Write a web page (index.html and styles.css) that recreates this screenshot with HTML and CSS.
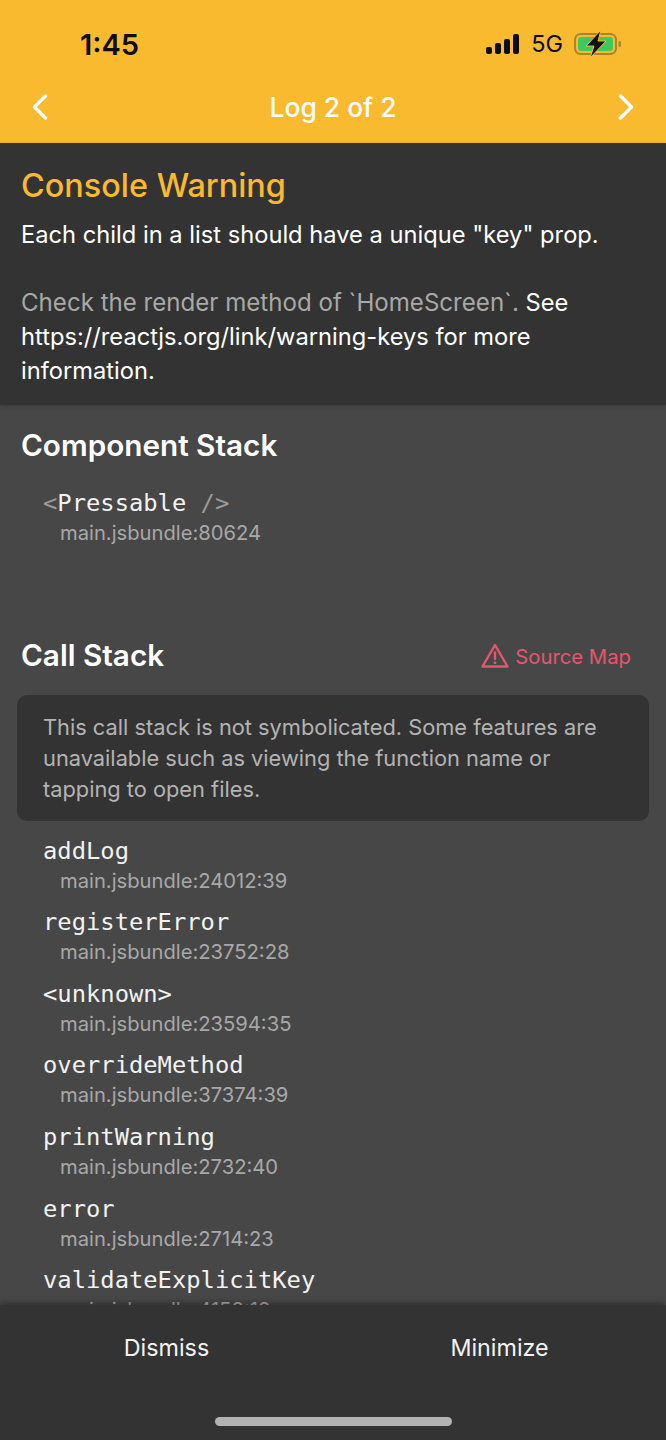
FILE: index.html
```html
<!DOCTYPE html>
<html lang="en">
<head>
<meta charset="utf-8">
<title>Log 2 of 2</title>
<link rel="stylesheet" href="styles.css">
</head>
<body>
<div class="screen">
  <header class="top">
    <div class="status">
      <span class="time">1:45</span>
      <div class="status-right">
        <svg class="signal" width="34" height="20" viewBox="0 0 34 20"><rect x="0" y="13" width="6" height="7" rx="2"/><rect x="9" y="9" width="6" height="11" rx="2"/><rect x="18" y="5" width="6" height="15" rx="2"/><rect x="27" y="0" width="6" height="20" rx="2"/></svg>
        <span class="net">5G</span>
        <svg class="battery" width="48" height="28" viewBox="0 0 48 28"><rect x="1" y="4" width="41" height="20" rx="5.5" fill="none" stroke="#a9852c" stroke-width="2"/><rect x="4" y="7" width="35" height="14" rx="3" fill="#41c85c"/><rect x="44.5" y="11" width="2.5" height="6" rx="1.2" fill="#a9852c"/><path d="M27 0 L12 16 H20 L16 28 L32 11 H24 Z" fill="#111" stroke="#faba30" stroke-width="1"/></svg>
      </div>
    </div>
    <nav class="nav">
      <svg class="chev" width="16" height="26" viewBox="0 0 16 26"><path d="M13.5 2 L2.5 13 L13.5 24"/></svg>
      <span class="nav-title">Log 2 of 2</span>
      <svg class="chev" width="16" height="26" viewBox="0 0 16 26"><path d="M2.5 2 L13.5 13 L2.5 24"/></svg>
    </nav>
  </header>

  <section class="message">
    <h1 class="level">Console Warning</h1>
    <p class="text">Each child in a list should have a unique "key" prop.</p>
    <p class="text detail"><span class="dim">Check the render method of `HomeScreen`.</span> See https://reactjs.org/link/warning-keys for more information.</p>
  </section>

  <main class="body">
    <h2 class="heading">Component Stack</h2>
    <div class="frame first">
      <div class="fn"><span class="dim2">&lt;</span>Pressable <span class="dim2">/&gt;</span></div>
      <div class="loc">main.jsbundle:80624</div>
    </div>

    <div class="call-head">
      <h2 class="heading">Call Stack</h2>
      <div class="source">
        <svg width="28" height="26" viewBox="0 0 28 26"><path d="M14 2 L26.5 23.5 H1.5 Z" fill="none" stroke="#e5566f" stroke-width="2.4" stroke-linejoin="round"/><path d="M14 9.5 V16" stroke="#e5566f" stroke-width="2.4" stroke-linecap="round"/><circle cx="14" cy="19.8" r="1.4" fill="#e5566f"/></svg>
        <span>Source Map</span>
      </div>
    </div>

    <div class="notice">This call stack is not symbolicated. Some features are unavailable such as viewing the function name or tapping to open files.</div>

    <div class="frame"><div class="fn">addLog</div><div class="loc">main.jsbundle:24012:39</div></div>
    <div class="frame"><div class="fn">registerError</div><div class="loc">main.jsbundle:23752:28</div></div>
    <div class="frame"><div class="fn">&lt;unknown&gt;</div><div class="loc">main.jsbundle:23594:35</div></div>
    <div class="frame"><div class="fn">overrideMethod</div><div class="loc">main.jsbundle:37374:39</div></div>
    <div class="frame"><div class="fn">printWarning</div><div class="loc">main.jsbundle:2732:40</div></div>
    <div class="frame"><div class="fn">error</div><div class="loc">main.jsbundle:2714:23</div></div>
    <div class="frame"><div class="fn">validateExplicitKey</div><div class="loc">main.jsbundle:4158:18</div></div>
  </main>

  <footer class="bottom">
    <div class="actions">
      <span class="action">Dismiss</span>
      <span class="action">Minimize</span>
    </div>
    <div class="home"></div>
  </footer>
</div>
</body>
</html>
```

FILE: styles.css
```css
* { box-sizing: border-box; }
html, body { margin: 0; padding: 0; }
body { background: #474747; font-family: Inter, "Liberation Sans", sans-serif; color: #fff; }
.screen { width: 666px; height: 1440px; display: flex; flex-direction: column; overflow: hidden; }

.top { height: 143px; flex: none; background: #faba30; display: flex; flex-direction: column; }
.status { height: 84px; padding: 26px 44px 0 80px; display: flex; justify-content: space-between; align-items: flex-start; color: #0d0d0d; }
.time { font-size: 29px; font-weight: 600; line-height: 36px; margin-top: 1px; }
.status-right { display: flex; align-items: center; height: 36px; gap: 11px; }
.signal { fill: #0d0d0d; }
.net { font-size: 23.5px; line-height: 36px; }
.nav { height: 46px; padding: 0 32px; display: flex; align-items: center; justify-content: space-between; }
.chev { fill: none; stroke: #fff; stroke-width: 3.4; stroke-linecap: round; stroke-linejoin: round; }
.nav-title { font-size: 26.4px; font-weight: 500; }

.message { height: 262px; flex: none; background: #333; padding: 23px 21px 0; box-shadow: 0 1px 4px rgba(0,0,0,.2); position: relative; }
.level { margin: 0; font-size: 32.4px; line-height: 40px; font-weight: 500; color: #faba30; }
.text { margin: 0; font-size: 23.7px; line-height: 34px; }
.level + .text { margin-top: 12px; }
.detail { margin-top: 34px; }
.dim { color: #a8a8a8; font-size: 24.1px; }

.body { flex: 1; min-height: 0; overflow: hidden; padding-top: 20px; }
.heading { margin: 0; font-size: 29.7px; line-height: 40px; font-weight: 600; padding-left: 21px; }
.frame { padding: 0 0 0 43px; height: 71.6px; }
.frame.first { margin-top: 22px; }
.fn { font-family: "DejaVu Sans Mono", monospace; font-size: 23.8px; line-height: 33px; color: #f2f2f2; }
.dim2 { color: #9a9a9a; }
.loc { font-size: 20.2px; line-height: 25px; color: #a8a8a8; padding-left: 17px; }

.call-head { margin-top: 76px; display: flex; align-items: center; justify-content: space-between; padding-right: 35px; }
.source { display: flex; align-items: center; gap: 6px; padding-top: 3px; color: #e5566f; font-size: 20.3px; }
.notice { margin: 20px 17px 14px; background: #333; border-radius: 10px; padding: 17px 26px 0; height: 126px; font-size: 21.8px; line-height: 31px; color: #b3b3b3; }

.bottom { height: 135px; flex: none; background: #333; position: relative; box-shadow: 0 -2px 6px rgba(0,0,0,.35); display: flex; flex-direction: column; align-items: center; }
.actions { width: 100%; display: grid; grid-template-columns: 1fr 1fr; padding-top: 27px; }
.action { text-align: center; font-size: 23.3px; line-height: 32px; color: #f2f2f2; }
.home { position: absolute; bottom: 14px; left: 215px; width: 237px; height: 9px; border-radius: 5px; background: #b3b3b3; }
```
